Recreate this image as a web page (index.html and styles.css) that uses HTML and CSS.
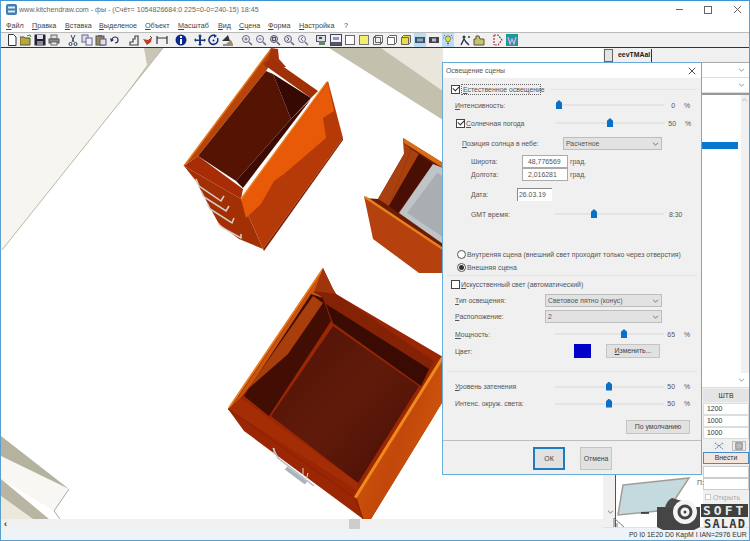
FILE: index.html
```html
<!DOCTYPE html>
<html lang="ru">
<head>
<meta charset="utf-8">
<title>KitchenDraw</title>
<link rel="stylesheet" href="styles.css">
</head>
<body>
<div class="app">
  <header class="titlebar">
    <svg class="appicon" viewBox="0 0 11 11"><rect x="0" y="0" width="11" height="11" rx="2" fill="#3f7fb5"/><rect x="2" y="2.500" width="7" height="2" fill="#dfeaf4"/><rect x="2" y="6.500" width="7" height="2" fill="#dfeaf4"/></svg>
    <span class="titletext">www.kitchendraw.com - фы - (Счёт= 1054826684:0 225=0-0=240-15) 18:45</span>
    <div class="winbtns">
      <span class="winmin"></span>
      <span class="winmax"></span>
      <svg class="winx" viewBox="0 0 10 10"><path d="M1 1l8 8M9 1l-8 8" stroke="#555" fill="none"/></svg>
    </div>
  </header>
  <nav class="menubar">
    <span class="m m1"><u>Ф</u>айл</span><span class="m m2"><u>П</u>равка</span><span class="m m3"><u>В</u>ставка</span><span class="m m4"><u>В</u>ыделеное</span><span class="m m5"><u>О</u>бъект</span><span class="m m6"><u>М</u>асштаб</span><span class="m m7"><u>В</u>ид</span><span class="m m8"><u>С</u>цена</span><span class="m m9"><u>Ф</u>орма</span><span class="m m10"><u>Н</u>астройка</span><span class="m">?</span>
  </nav>
  <div class="toolbar">
    <svg class="ti" viewBox="0 0 12 12"><path d="M2.500 .5h5l2.500 2.500v8.500h-7.500z" fill="#fff" stroke="#333"/></svg>
    <svg class="ti" viewBox="0 0 12 12"><path d="M0 3h4l1 1h5v7H0z" fill="#b5a83c" stroke="#554"/><path d="M7 2l3-1 1 2" stroke="#292" fill="none"/></svg>
    <svg class="ti" viewBox="0 0 12 12"><rect x=".5" y=".5" width="11" height="11" fill="#223"/><rect x="3" y="1" width="6" height="4" fill="#dde"/><rect x="3" y="7" width="6" height="4" fill="#889"/></svg>
    <svg class="ti g" viewBox="0 0 12 12"><rect x="3" y="1" width="6" height="4" fill="#ddd" stroke="#666"/><rect x="1" y="5" width="10" height="4" fill="#888" stroke="#555"/><rect x="3" y="8" width="6" height="3" fill="#eee" stroke="#666"/></svg>
    <svg class="ti" viewBox="0 0 12 12"><path d="M4 1l3 7M8 1L5 8" stroke="#445" fill="none"/><circle cx="3.500" cy="10" r="1.500" fill="none" stroke="#246"/><circle cx="8.500" cy="10" r="1.500" fill="none" stroke="#246"/></svg>
    <svg class="ti" viewBox="0 0 12 12"><rect x="1" y="1" width="6" height="7" fill="#dde" stroke="#668"/><rect x="5" y="4" width="6" height="7" fill="#eef" stroke="#668"/></svg>
    <svg class="ti" viewBox="0 0 12 12"><rect x="1" y="2" width="8" height="9" fill="#9a8a55" stroke="#555"/><rect x="5" y="5" width="6" height="6" fill="#dde" stroke="#557"/><rect x="3" y="1" width="4" height="2" fill="#667"/></svg>
    <svg class="ti g" viewBox="0 0 12 12"><path d="M3 6a3 3 0 1 1 3 3" fill="none" stroke="#335" stroke-width="1.200"/><path d="M1 4l1 4 3-2z" fill="#335"/></svg>
    <svg class="ti" viewBox="0 0 12 12"><path d="M2 11V8h3V5h2V2h3v9z" fill="none" stroke="#444" stroke-width="1.200"/></svg>
    <svg class="ti" viewBox="0 0 12 12"><path d="M1 5l5 1 4-3-1 5-4 3z" fill="#c03a2a"/><path d="M8 2l2 2" stroke="#444"/></svg>
    <svg class="ti g" viewBox="0 0 12 12"><path d="M1 2v8M11 2v8M1 4h10" stroke="#334" stroke-width="1.200" fill="none"/></svg>
    <svg class="ti g" viewBox="0 0 12 12"><circle cx="6" cy="6" r="5.500" fill="#0a2a8c"/><rect x="5" y="5" width="2" height="5" fill="#fff"/><rect x="5" y="2" width="2" height="2" fill="#fff"/></svg>
    <svg class="ti" viewBox="0 0 12 12"><path d="M6 0l2 2.500H7v3h3V4.500L12 6l-2 2V7H7v3h1l-2 2-2-2h1V7H2v1L0 6l2-2v1.500h3v-3H4z" fill="#1f3a7c"/></svg>
    <svg class="ti" viewBox="0 0 12 12"><path d="M9.500 4a4.500 4.500 0 1 1-3-2.500" fill="none" stroke="#14307a" stroke-width="1.500"/><path d="M6 0v4l3-2z" fill="#14307a"/><circle cx="5.500" cy="6.500" r="1" fill="#14307a"/></svg>
    <svg class="ti g" viewBox="0 0 12 12"><path d="M6 1l2 6H0z" fill="#334"/><path d="M4 10h7l-2-4z" fill="#a98a3a"/><path d="M1 11h10" stroke="#333"/></svg>
    <svg class="ti" viewBox="0 0 12 12"><circle cx="5" cy="5" r="3.500" fill="#eef" stroke="#667"/><path d="M8 8l3 3" stroke="#667" stroke-width="1.500"/><path d="M3.500 5h3M5 3.500v3" stroke="#667"/></svg>
    <svg class="ti" viewBox="0 0 12 12"><circle cx="5" cy="5" r="3.500" fill="#eef" stroke="#667"/><path d="M8 8l3 3" stroke="#667" stroke-width="1.500"/><path d="M3.500 5h3" stroke="#667"/></svg>
    <svg class="ti" viewBox="0 0 12 12"><circle cx="5" cy="5" r="3.500" fill="#ccd" stroke="#556"/><path d="M8 8l3 3" stroke="#556" stroke-width="1.500"/><rect x="3.500" y="3.500" width="3" height="3" fill="none" stroke="#556"/></svg>
    <svg class="ti" viewBox="0 0 12 12"><circle cx="5" cy="5" r="3.500" fill="#dde" stroke="#667"/><path d="M8 8l3 3" stroke="#667" stroke-width="1.500"/><path d="M4 3l2 2-2 2" stroke="#667" fill="none"/></svg>
    <svg class="ti g" viewBox="0 0 12 12"><circle cx="5" cy="5" r="3.500" fill="#eef" stroke="#778"/><path d="M8 8l3 3" stroke="#778" stroke-width="1.500"/><path d="M6 3L4 5l2 2" stroke="#778" fill="none"/></svg>
    <svg class="ti" viewBox="0 0 12 12"><rect x=".5" y="1.500" width="9" height="6" fill="#dde" stroke="#455"/><path d="M3 7h6v4H3z" fill="#686"/><path d="M3 3h3v2H3z" fill="#354"/></svg>
    <svg class="ti" viewBox="0 0 12 12"><rect x=".5" y=".5" width="11" height="11" fill="#eef" stroke="#445"/><path d="M1 8h10v3H1z" fill="#556"/><path d="M3 3h6v3H3z" fill="#99a"/></svg>
    <svg class="ti" viewBox="0 0 12 12"><rect x="1.500" y="1.500" width="9" height="9" fill="#fff" stroke="#666"/></svg>
    <svg class="ti" viewBox="0 0 12 12"><rect x="1.500" y="1.500" width="9" height="9" fill="#f4ee70" stroke="#777"/></svg>
    <svg class="ti" viewBox="0 0 12 12"><path d="M1.500 3.500h7v7h-7zM1.500 3.500l2-2h7v7l-2 2M3.500 1.500v7h7" fill="none" stroke="#666"/></svg>
    <svg class="ti" viewBox="0 0 12 12"><path d="M1.500 3.500h7v7h-7zM1.500 3.500l2-2h7v7l-2 2" fill="#fff" stroke="#666"/></svg>
    <svg class="ti" viewBox="0 0 12 12"><path d="M1.500 3.500h7v7h-7zM1.500 3.500l2-2h7v7l-2 2" fill="#e8e040" stroke="#666"/></svg>
    <span class="tiactive"><svg class="ti" viewBox="0 0 12 12"><rect x="1" y="3" width="10" height="6" fill="#3a5470"/><rect x="3" y="4.500" width="6" height="3" fill="#8aa"/></svg></span>
    <svg class="ti" viewBox="0 0 12 12"><rect x="1" y="3" width="10" height="6" fill="#44444f"/><rect x="4" y="4.500" width="4" height="3" fill="#bbc"/></svg>
    <span class="tiactive gs"><svg class="ti" viewBox="0 0 12 12"><path d="M3.500 4.500a2.500 2.500 0 1 1 5 0c0 1.500-1.500 2-1.500 3.500H5c0-1.500-1.500-2-1.500-3.500z" fill="#e6e23a" stroke="#775"/><path d="M5 9.500h2M5.500 11h1M1 4h1M10 4h1M2 1l1 1M10 1L9 2" stroke="#666" fill="none"/></svg></span>
    <svg class="ti" viewBox="0 0 12 12"><path d="M2 11l3-6 2 3 3 3" fill="none" stroke="#225" stroke-width="1.300"/><circle cx="5" cy="3" r="1.500" fill="#243"/><circle cx="10" cy="3" r="1" fill="#243"/></svg>
    <svg class="ti g" viewBox="0 0 12 12"><path d="M1 11V5h2V2h3l1 3h4v6z" fill="#c8c26a" stroke="#554"/></svg>
    <svg class="ti" viewBox="0 0 12 12"><path d="M2 1v10M2 1h4l4 5-4 5H2" fill="none" stroke="#a23a4a" stroke-dasharray="2 1" stroke-width="1.200"/></svg>
    <svg class="ti" viewBox="0 0 12 12"><rect width="12" height="12" fill="#1b9a94"/><path d="M2 3l2 7 2-5 2 5 2-7" fill="none" stroke="#eaf" stroke-width="1.200"/></svg>
  </div>
  <main class="workspace">
    <div class="canvas">
      <svg class="scene" viewBox="0 47 602 471" preserveAspectRatio="none">
        <defs>
          <linearGradient id="gr3" x1="0" y1="0" x2="1" y2=".6"><stop offset="0" stop-color="#d8600c"/><stop offset=".6" stop-color="#c2470a"/><stop offset="1" stop-color="#d25a0c"/></linearGradient>
          <linearGradient id="fl3" x1="0" y1="0" x2="1" y2="1"><stop offset="0" stop-color="#4e1206"/><stop offset=".5" stop-color="#611a0a"/><stop offset="1" stop-color="#450f05"/></linearGradient>
        </defs>
        <rect x="0" y="47" width="602" height="471" fill="#fff"/>
        <polygon points="0,47 162,47 2,248 0,248" fill="#f7f5f0"/>
        <polygon points="143,47 162,47 118,103 146,64" fill="#c9c6b6"/>
        <path d="M162 47L1 249" stroke="#b9b6aa" fill="none"/>
        <polygon points="380,47 442,47 442,90" fill="#e9e6dc"/>
        <polygon points="328,47 380,47 442,90 442,119" fill="#c3c0ae"/>
        <polygon points="0,455 68,488 53,510 0,478" fill="#f8f7f3"/>
        <polygon points="0,435 68,488 0,455" fill="#b5b2a0"/>
        <polygon points="0,495 32,518 0,518" fill="#ece8dc"/>
        <polygon points="0,478 48,518 32,518 0,495" fill="#b8b5a3"/>
        <path d="M68 488L53 510L59 518" stroke="#a3a8a8" fill="none"/>

        <polygon points="183,165 240,198 262,248 238,238 218,223 207,203 195,180" fill="#a33005"/>
        <polygon points="183,165 270,48 272,58 265,70 197,155" fill="#b8440a"/>
        <path d="M183 165L270 48" stroke="#e8761a" stroke-width="1.500"/>
        <polygon points="270,47 277,48 278,58 285,66 267,66 265,70" fill="#a53208"/>
        <polygon points="262,63 270,57 317,90 310,97" fill="#a03008"/>
        <polygon points="197,155 265,70 272,73 290,118 235,180" fill="#551303"/>
        <polygon points="272,73 310,97 290,118" fill="#360902"/>
        <polygon points="290,118 310,98 242,187 235,180" fill="#3e0b02"/>
        <polygon points="183,165 197,155 242,188 240,198" fill="#a82c05"/>
        <polygon points="240,198 327,80 342,137 262,248" fill="#b63a08"/>
        <polygon points="240,198 327,82 333,110 322,117 325,137 283,173 273,180 260,203 245,217" fill="#e85a08"/>
        <path d="M240 198L326 81" stroke="#f08020" stroke-width="1.500"/>
        <polygon points="262,248 342,137 342,139 263,250" fill="#7e2002"/>
        <path d="M195 178l3 7 22 15 3-5M200 190l3 6 22 14 3-5M206 202l3 6 22 14 2-5M217 222l3 4 20 11 0-4" fill="none" stroke="#d6d2ca" stroke-width="1.500"/>

        <polygon points="402,137 442,162 442,250 363,197 377,198 403,153" fill="#6a1c04"/>
        <polygon points="402,137 442,162 442,167 403,142" fill="#dd6c12"/>
        <polygon points="403,142 410,148 388,205 377,198 403,153" fill="#a8400f"/>
        <polygon points="410,148 418,153 388,205" fill="#a8400f"/>
        <polygon points="418,153 432,163 397,212 388,205" fill="#4a0f04"/>
        <polygon points="432,163 442,167 442,243 398,212" fill="#bfc4c6"/>
        <polygon points="436,172 442,175 442,236 406,212" fill="#a9aeb2"/>
        <polygon points="363,195 442,247 442,272 418,272 372,238" fill="#b5420e"/>
        <path d="M364 196L442 248" stroke="#e8801e" stroke-width="2.500"/>

        <polygon points="227,408 322,267 332,288 335,293 442,356 442,400 430,420 370,518 362,518 243,430" fill="#9a2604"/>
        <polygon points="230,407 320,273 313,292 322,295 240,396" fill="#c8550f"/>
        <path d="M228 407L322 268" stroke="#e87a1a" stroke-width="2"/>
        <polygon points="322,267 332,288 335,293 318,291 313,292" fill="#a0340a"/>
        <polygon points="243,395 310,293 322,297 330,320 268,415" fill="#420d03"/>
        <polygon points="247,388 312,295 322,302 298,337 287,353" fill="#a83e0c"/>
        <polygon points="312,290 335,293 433,360 420,385 332,323 322,297" fill="#842205"/>
        <polygon points="325,303 428,368 420,385 332,322" fill="#3a0b03"/>
        <polygon points="332,325 418,385 357,482 270,415" fill="url(#fl3)"/>
        <polygon points="227,408 240,397 357,482 357,490" fill="#a52d06"/>
        <polygon points="355,493 442,353 442,400 430,420 370,518 362,518" fill="url(#gr3)"/>
        <path d="M354 497L442 356" stroke="#ee8a1c" stroke-width="3"/>
        <path d="M227 408L354 497L362 518" stroke="#8a2003" fill="none"/>
        <path d="M272 447l5 10 36 28" fill="none" stroke="#b5bcc4" stroke-width="1.500"/>
        <path d="M285 467l20 15" stroke="#aab4bd" stroke-width="4"/>
        <path d="M273 447v7M302 467v8M307 472l-2 7" stroke="#d8dde0" fill="none"/>
      </svg>
      <div class="hscroll"><span class="harrow">‹</span><span class="hthumb"></span></div>
    </div>
    <aside class="sidepanel">
      <div class="tabs"><span class="tabicon"></span><span class="tab">ееvTМАаI</span></div>
      <div class="rsel rsel1"><svg class="chev" viewBox="0 0 8 5"><path d="M1 1l3 3 3-3" stroke="#777" fill="none"/></svg></div>
      <div class="rsel"><svg class="chev" viewBox="0 0 8 5"><path d="M1 1l3 3 3-3" stroke="#777" fill="none"/></svg></div>
      <div class="rlist"><span class="rowsel"></span><span class="rscroll"><svg class="rup" viewBox="0 0 8 5"><path d="M1 4l3-3 3 3" stroke="#aaa" fill="none"/></svg></span></div>
      <div class="rsel rsel3"><svg class="chev" viewBox="0 0 8 5"><path d="M1 1l3 3 3-3" stroke="#777" fill="none"/></svg></div>
      <div class="rhead">ШТВ</div>
      <div class="rinput">1200</div>
      <div class="rinput">1000</div>
      <div class="rinput">1000</div>
      <div class="ricons">
        <svg viewBox="0 0 12 10" class="ricon"><path d="M2 2l8 6M10 2L2 8" stroke="#5a7a90" stroke-dasharray="2 1" fill="none"/></svg>
        <svg viewBox="0 0 12 10" class="ricon boxed"><rect x="2" y="1" width="8" height="8" fill="#bbb" stroke="#777"/></svg>
      </div>
      <div class="rbtn">Внести</div>
      <div class="rempty r1"></div>
      <div class="rempty"></div>
      <div class="rcheck"><span class="rbox"></span>Открыть</div>
      <div class="preview">
        <svg class="previewart" viewBox="0 0 88 53">
          <polygon points="8,10 74,3 53,35 3,40" fill="#c5dade" stroke="#a09e94" stroke-width="1.500"/>
          <path d="M-1 43l11 10M-1 43v10h11M2 48v5" fill="none" stroke="#777"/>
          <path d="M26 38h8" stroke="#223" stroke-width="1.500"/>
        </svg>
        <svg class="pchev" viewBox="0 0 8 5"><path d="M1 1l3 3 3-3" stroke="#555" fill="none"/></svg>
        <span class="pi">П:</span>
      </div>
    </aside>
  </main>
  <div class="bottombar"><span class="status">P0 I0 1E20 D0 KapM I IAN=2976 EUR</span></div>

  <section class="dialog">
    <div class="dtitle"><span>Освещение сцены</span><svg class="dclose" viewBox="0 0 10 10"><path d="M1 1l8 8M9 1l-8 8" stroke="#222" fill="none"/></svg></div>
    <div class="dbody">
      <div class="row h16 pl9 mt3">
        <span class="chk on"></span><span class="focus"><u>Е</u>стественное освещение</span><span class="rule"></span>
      </div>
      <div class="row h16 pl13"><span class="lab w100"><u>И</u>нтенсивность:</span><span class="slider"><i class="thumb t0"></i></span><span class="val">0</span><span class="pc">%</span></div>
      <div class="row h20 pl14"><span class="chk on"></span><span class="lab w90"><u>С</u>олнечная погода</span><span class="slider"><i class="thumb t50"></i></span><span class="val">50</span><span class="pc">%</span></div>
      <div class="row h20 pl20"><span class="lab w101"><u>П</u>озиция солнца в небе:</span><span class="sel w99">Расчетное<svg class="chev" viewBox="0 0 8 5"><path d="M1 1l3 3 3-3" stroke="#555" fill="none"/></svg></span></div>
      <div class="row h13 pl29 mt2"><span class="lab w51">Широта:</span><span class="inp w46">48,776569</span><span class="unit">град.</span></div>
      <div class="row h13 pl29"><span class="lab w51">Долгота:</span><span class="inp w46">2,016281</span><span class="unit">град.</span></div>
      <div class="row h20 pl29 mt3"><span class="lab w46">Дата:</span><span class="inp w35 date">26.03.19</span></div>
      <div class="row h20 pl29"><span class="lab w84">GMT время:</span><span class="slider"><i class="thumb t35"></i></span><span class="val left">8:30</span></div>
      <div class="row h13 pl15 mt24"><span class="radio"></span><span>Внутреняя сцена (внешний свет проходит только через отверстия)</span></div>
      <div class="row h13 pl15"><span class="radio on"></span><span>Внешняя сцена</span></div>
      <div class="sep"></div>
      <div class="row h16 pl9"><span class="chk"></span><span class="lab"><u>И</u>скусственный свет (автоматический)</span></div>
      <div class="row h16 pl13"><span class="lab w90b"><u>Т</u>ип освещения:</span><span class="sel w117">Световое пятно (конус)<svg class="chev" viewBox="0 0 8 5"><path d="M1 1l3 3 3-3" stroke="#555" fill="none"/></svg></span></div>
      <div class="row h16 pl13"><span class="lab w90b"><u>Р</u>асположение:</span><span class="sel w117">2<svg class="chev" viewBox="0 0 8 5"><path d="M1 1l3 3 3-3" stroke="#555" fill="none"/></svg></span></div>
      <div class="row h20 pl13"><span class="lab w100"><u>М</u>ощность:</span><span class="slider"><i class="thumb t65"></i></span><span class="val">65</span><span class="pc">%</span></div>
      <div class="row h14 pl13"><span class="lab w119">Цвет:</span><span class="swatch"></span><span class="btn change"><u>И</u>зменить...</span></div>
      <div class="sep s2"></div>
      <div class="row h17 pl13"><span class="lab w100"><u>У</u>ровень затенения</span><span class="slider"><i class="thumb t50"></i></span><span class="val">50</span><span class="pc">%</span></div>
      <div class="row h17 pl13"><span class="lab w100">Интенс. окруж. света:</span><span class="slider"><i class="thumb t50"></i></span><span class="val">50</span><span class="pc">%</span></div>
      <div class="defrow"><span class="btn def">По умолчанию</span></div>
    </div>
    <div class="dfoot"><span class="btn ok">ОК</span><span class="btn cancel">Отмена</span></div>
  </section>

  <div class="wm">
    <svg class="wmicon" viewBox="0 0 44 34"><path d="M0 9h43v20l-6 3H6l-6-3z" fill="#454545"/><path d="M8 10a14 14 0 0 1 7-10l10 3 6 7z" fill="#4a4a4a"/><circle cx="28" cy="14" r="12" fill="#f4f4f4"/><circle cx="28" cy="14" r="6" fill="none" stroke="#444" stroke-width="3"/><circle cx="28" cy="14" r="1.500" fill="#444"/></svg>
    <div class="wmtext"><span class="wmsoft">SOFT</span><span class="wmsalad">SALAD</span></div>
  </div>
</div>
</body>
</html>
```
FILE: styles.css
```css
* { box-sizing: border-box; }
html, body { margin: 0; padding: 0; }
body { width: 750px; height: 541px; overflow: hidden; background: #fff; font-family: "Liberation Sans", Arial, sans-serif; font-size: 6.900px; color: #555; }
u { text-decoration: underline; text-underline-offset: 1px; }
.app { position: relative; width: 750px; height: 541px; display: flex; flex-direction: column; border: 1px solid #5a9fd0; border-top-color: #3f94d4; overflow: hidden; }

.titlebar { height: 17px; flex: none; display: flex; align-items: center; padding-left: 5px; background: #fff; }
.appicon { width: 11px; height: 11px; margin-right: 2px; }
.titletext { font-size: 7.100px; color: #666; white-space: nowrap; }
.winbtns { margin-left: auto; display: flex; align-items: center; gap: 21px; padding-right: 7px; }
.winmin { width: 7px; height: 1px; background: #666; }
.winmax { width: 8px; height: 8px; border: 1px solid #666; }
.winx { width: 9px; height: 9px; }

.menubar { height: 14px; flex: none; display: flex; align-items: center; padding-left: 5px; background: #fff; color: #444; font-size: 7.200px; white-space: nowrap; }
.m { display: block; }
.m1 { width: 26px; } .m2 { width: 33px; } .m3 { width: 34px; } .m4 { width: 46px; } .m5 { width: 33px; } .m6 { width: 40px; } .m7 { width: 21px; } .m8 { width: 29px; } .m9 { width: 31px; } .m10 { width: 45px; }

.toolbar { height: 15px; flex: none; display: flex; align-items: center; padding-left: 5px; background: #f0f0f0; border-top: 1px solid #bbb; gap: 2px; }
.ti { width: 12px; height: 12px; flex: none; display: block; }
.ti.g { margin-right: 5px; }
.tiactive { background: #bcdcf4; display: block; height: 14px; padding-top: 1px; }
.tiactive.gs { margin-right: 3px; }

.workspace { flex: 1; min-height: 0; display: flex; border-top: 1px solid #333; }
.canvas { width: 602px; flex: none; display: flex; flex-direction: column; min-height: 0; }
.scene { display: block; width: 602px; height: 471px; flex: none; }
.hscroll { height: 10px; flex: none; background: #f0f0f0; position: relative; display: flex; align-items: center; padding-left: 3px; font-size: 9px; line-height: 10px; color: #333; font-weight: bold; }
.hthumb { position: absolute; left: 348px; top: 0; width: 11px; height: 10px; background: #cdcdcd; }

.sidepanel { flex: 1; min-width: 0; display: flex; flex-direction: column; background: #f0f0f0; position: relative; overflow: hidden; }
.tabs { display: flex; height: 15px; flex: none; align-items: flex-end; border-bottom: 1px solid #aaa; }
.tabicon { width: 9px; height: 13px; margin-left: 1px; background: #e4e4e4; border: 1px solid #666; }
.tab { height: 13px; line-height: 12px; padding: 0 1px 0 5px; border-right: 1px solid #333; color: #222; font-size: 6.900px; font-weight: bold; width: 39px; white-space: nowrap; overflow: hidden; }
.rsel { height: 15px; flex: none; background: #fff; position: relative; border-bottom: 1px solid #ddd; }
.rsel .chev { position: absolute; right: 4px; top: 5px; }
.rlist { height: 280px; flex: none; background: #fff; position: relative; border-top: 2px solid #999; }
.rowsel { position: absolute; left: 90px; top: 47px; width: 45px; height: 7px; background: #0a78d0; }
.rscroll { position: absolute; right: 0; top: 0; width: 8px; height: 100%; background: #f0f0f0; }
.rup { display: block; width: 7px; height: 4px; margin: 3px 0 0 0; }
.rhead { margin: 1px 0 1px 100px; height: 13px; line-height: 13px; background: #e4e4e4; text-align: center; color: #333; flex: none; }
.rinput { margin-left: 100px; height: 12px; line-height: 10px; padding-left: 3px; background: #fff; border: 1px solid #ddd; color: #333; flex: none; }
.ricons { display: flex; justify-content: flex-end; gap: 6px; padding: 2px 3px 1px 0; height: 13px; flex: none; }
.ricon { width: 14px; height: 10px; background: #eee; }
.ricon.boxed { border: 1px solid #bbb; }
.rbtn { margin-left: 100px; height: 12px; line-height: 10px; text-align: center; border: 1px solid #3f8fd0; background: #f3e4dc; color: #333; flex: none; }
.rempty { margin-left: 100px; height: 12px; background: #fff; border: 1px solid #ccc; flex: none; }
.rempty.r1 { margin-top: 2px; }
.rcheck { margin-left: 102px; height: 14px; color: #aaa; display: flex; align-items: center; gap: 2px; flex: none; }
.rbox { width: 6px; height: 6px; background: #fff; border: 1px solid #ccc; }
.preview { position: absolute; left: 12px; top: 427px; width: 88px; height: 53px; background: #fff; border-left: 1px solid #555; }
.previewart { position: absolute; left: -1px; top: 0; width: 88px; height: 53px; overflow: visible; }
.pchev { position: absolute; left: -9px; top: 35px; width: 7px; height: 4px; }
.pi { position: absolute; left: 81px; top: 4px; }

.bottombar { height: 13px; flex: none; background: #edf3f7; border-top: 1px solid #e6e0da; padding: 2px 0 0 628px; line-height: 9px; }
.status { white-space: nowrap; color: #333; }

.dialog { position: absolute; left: 441px; top: 61px; width: 260px; height: 413px; background: #f0f0f0; border: 1px solid #68aad8; display: flex; flex-direction: column; z-index: 2; }
.dtitle { height: 15px; flex: none; display: flex; justify-content: space-between; align-items: center; padding: 0 5px 0 3px; background: #fff; color: #555; }
.dclose { width: 8px; height: 8px; }
.dbody { flex: 1; min-height: 0; display: flex; flex-direction: column; }
.row { display: flex; align-items: center; white-space: nowrap; flex: none; color: #555; }
.h13 { height: 13px; } .h14 { height: 14px; } .h16 { height: 16px; } .h17 { height: 17px; } .h20 { height: 20px; }
.mt2 { margin-top: 2px; } .mt3 { margin-top: 3px; } .mt24 { margin-top: 24px; }
.pl9 { padding-left: 8px; } .pl13 { padding-left: 12px; } .pl14 { padding-left: 13px; } .pl15 { padding-left: 14px; } .pl20 { padding-left: 19px; } .pl29 { padding-left: 28px; }
.chk { width: 9px; height: 9px; border: 1px solid #444; background: #fff; margin-right: 1px; flex: none; position: relative; }
.chk.on::after { content: ""; position: absolute; left: 1px; top: 0; width: 5px; height: 3px; border-left: 1px solid #333; border-bottom: 1px solid #333; transform: rotate(-45deg); }
.focus { border: 1px dotted #666; padding: 0 0 0 1px; line-height: 9px; width: 80px; }
.rule { flex: 1; height: 1px; background: #e2e2e2; margin: 0 5px 0 10px; }
.lab { display: block; flex: none; }
.w100 { width: 100px; } .w90 { width: 90px; } .w101 { width: 101px; } .w51 { width: 51px; } .w46 { width: 46px; } .w84 { width: 84px; } .w90b { width: 90px; } .w119 { width: 119px; }
.slider { width: 109px; height: 2px; background: #e4e4e4; flex: none; position: relative; }
.thumb { position: absolute; top: -4px; width: 6px; height: 9px; background: #0a6fc8; clip-path: polygon(50% 0, 100% 30%, 100% 100%, 0 100%, 0 30%); }
.t0 { left: 1px; } .t35 { left: 36px; } .t50 { left: 51px; } .t65 { left: 66px; }
.val { width: 11px; text-align: right; flex: none; }
.val.left { text-align: left; padding-left: 5px; width: 28px; }
.pc { margin-left: 9px; }
.sel { height: 13px; line-height: 11px; background: #e2e2e2; border: 1px solid #bdbdbd; padding-left: 2px; position: relative; display: block; flex: none; color: #555; }
.sel .chev { position: absolute; right: 2px; top: 4px; }
.chev { width: 7px; height: 4px; display: block; }
.w99 { width: 99px; } .w117 { width: 117px; }
.inp { height: 13px; line-height: 11px; background: #fff; border: 1px solid #aaa; padding-left: 5px; display: block; flex: none; }
.unit { margin-left: 2px; }
.w35 { width: 35px; }
.date { padding-left: 1px; border-right: 0; border-bottom: 0; border-color: #888; }
.radio { width: 9px; height: 9px; border-radius: 50%; border: 1px solid #555; background: #fff; margin-right: 1px; flex: none; position: relative; }
.radio.on::after { content: ""; position: absolute; left: 1px; top: 1px; width: 5px; height: 5px; border-radius: 50%; background: #333; }
.sep { height: 1px; background: #e2e2e2; margin: 1px 4px 0; flex: none; }
.sep.s2 { margin: 13px 4px 6px; }
.swatch { width: 17px; height: 14px; background: #0000c8; flex: none; margin-right: 15px; }
.btn { display: block; text-align: center; background: #e1e1e1; border: 1px solid #c4c4c4; color: #444; flex: none; }
.change { width: 54px; height: 14px; line-height: 12px; }
.defrow { display: flex; justify-content: flex-end; padding: 8px 11px 0 0; }
.def { width: 64px; height: 14px; line-height: 12px; }
.dfoot { height: 34px; flex: none; display: flex; gap: 15px; padding: 6px 0 0 90px; border-top: 1px solid #bcbcbc; }
.ok { width: 32px; height: 23px; line-height: 19px; border: 2px solid #1f7cc0; }
.cancel { width: 32px; height: 23px; line-height: 21px; }

.wm { position: absolute; left: 656px; top: 497px; width: 92px; height: 34px; z-index: 3; }
.wmicon { width: 44px; height: 34px; position: absolute; left: 0; top: 0; }
.wmtext { position: absolute; left: 44px; top: 6px; width: 47px; display: flex; flex-direction: column; gap: 1px; font-family: "DejaVu Sans Mono", monospace; font-weight: bold; }
.wmsoft { background: #3f3f3f; color: #e8e8e8; font-size: 13px; letter-spacing: 3px; height: 13px; line-height: 13px; padding-left: 2px; white-space: nowrap; overflow: hidden; }
.wmsalad { color: #3a3a3a; font-size: 12px; letter-spacing: 1.200px; height: 13px; line-height: 13px; padding-left: 3px; }
```
